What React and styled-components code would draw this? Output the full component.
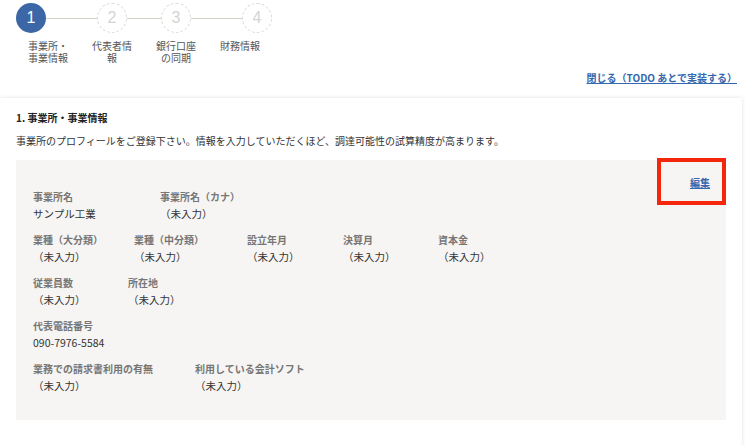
import React from 'react';
import styled, { createGlobalStyle } from 'styled-components';

const GlobalStyle = createGlobalStyle`
  body {
    margin: 0;
    background: #fff;
    font-family: "Noto Sans CJK JP", "Noto Sans", sans-serif;
    color: #333;
  }
`;

const Page = styled.div`
  width: 745px;
  height: 445px;
  overflow: hidden;
`;

const Stepper = styled.ol`
  display: flex;
  list-style: none;
  margin: 0;
  padding: 3px 0 0 16px;
`;

const Step = styled.li`
  width: 64px;
  display: flex;
  flex-direction: column;
  align-items: center;
`;

const StepHead = styled.div`
  width: 100%;
  display: flex;
  align-items: center;
`;

const Line = styled.span`
  flex: 1;
  height: 1px;
  background: ${(props) => (props.hidden ? 'transparent' : '#d6d1c6')};
`;

const Circle = styled.span`
  width: 30px;
  height: 30px;
  box-sizing: border-box;
  border-radius: 50%;
  display: flex;
  align-items: center;
  justify-content: center;
  font-family: "Liberation Sans", Arial, sans-serif;
  font-size: 16px;
  background: ${(props) => (props.active ? '#3c67a7' : '#fff')};
  color: ${(props) => (props.active ? '#fff' : '#d4d4d4')};
  border: ${(props) => (props.active ? 'none' : '1px dashed #d9d9d9')};
`;

const StepLabel = styled.span`
  margin-top: 7px;
  width: 44px;
  text-align: center;
  font-size: 10px;
  line-height: 12px;
  color: #555;
`;

const CloseRow = styled.div`
  display: flex;
  justify-content: flex-end;
  padding: 7px 8px 0 0;
`;

const TextLink = styled.a`
  font-size: 10px;
  line-height: 14px;
  font-weight: 600;
  color: #3467ad;
  text-decoration: underline;
  cursor: pointer;
`;

const Card = styled.section`
  margin: 13px 3px 0 0;
  background: #fff;
  box-shadow: 0 0 4px rgba(0, 0, 0, 0.12);
  padding: 13px 16px 40px;
`;

const Heading = styled.h2`
  margin: 0;
  font-size: 10px;
  line-height: 14px;
  font-weight: 700;
  color: #222;
`;

const Lead = styled.p`
  margin: 9px 0 0;
  font-size: 10px;
  line-height: 14px;
  color: #333;
`;

const InfoBox = styled.div`
  position: relative;
  margin-top: 12px;
  background: #f6f5f3;
  padding: 16px 16px 27px 17px;
`;

const EditBar = styled.div`
  display: flex;
  justify-content: flex-end;
`;

const Highlight = styled.span`
  position: absolute;
  top: -2px;
  right: 0;
  width: 69px;
  height: 47px;
  box-sizing: border-box;
  border: 4px solid #f4270c;
  pointer-events: none;
`;

const FieldRow = styled.div`
  display: flex;
  margin-top: ${(props) => props.gap}px;
`;

const Field = styled.div`
  width: ${(props) => (props.width ? `${props.width}px` : 'auto')};
  flex-shrink: 0;
`;

const FieldLabel = styled.div`
  font-size: 10px;
  line-height: 14px;
  font-weight: 600;
  color: #767676;
`;

const FieldValue = styled.div`
  margin-top: 3px;
  font-size: 10.5px;
  line-height: 14px;
  color: #333;
`;

const steps = [
  { no: 1, label: '事業所・事業情報', active: true },
  { no: 2, label: '代表者情報' },
  { no: 3, label: '銀行口座の同期' },
  { no: 4, label: '財務情報' },
];

const EMPTY = '（未入力）';

const rows = [
  [
    { label: '事業所名', value: 'サンプル工業', width: 127 },
    { label: '事業所名（カナ）', value: EMPTY },
  ],
  [
    { label: '業種（大分類）', value: EMPTY, width: 101 },
    { label: '業種（中分類）', value: EMPTY, width: 113 },
    { label: '設立年月', value: EMPTY, width: 96 },
    { label: '決算月', value: EMPTY, width: 95 },
    { label: '資本金', value: EMPTY },
  ],
  [
    { label: '従業員数', value: EMPTY, width: 95 },
    { label: '所在地', value: EMPTY },
  ],
  [{ label: '代表電話番号', value: '090-7976-5584' }],
  [
    { label: '業務での請求書利用の有無', value: EMPTY, width: 162 },
    { label: '利用している会計ソフト', value: EMPTY },
  ],
];

function App() {
  return (
    <Page>
      <GlobalStyle />
      <Stepper>
        {steps.map((step, index) => (
          <Step key={step.no}>
            <StepHead>
              <Line hidden={index === 0} />
              <Circle active={step.active}>{step.no}</Circle>
              <Line hidden={index === steps.length - 1} />
            </StepHead>
            <StepLabel>{step.label}</StepLabel>
          </Step>
        ))}
      </Stepper>

      <CloseRow>
        <TextLink>閉じる（TODO あとで実装する）</TextLink>
      </CloseRow>

      <Card>
        <Heading>1. 事業所・事業情報</Heading>
        <Lead>
          事業所のプロフィールをご登録下さい。情報を入力していただくほど、調達可能性の試算精度が高まります。
        </Lead>
        <InfoBox>
          <Highlight />
          <EditBar>
            <TextLink>編集</TextLink>
          </EditBar>
          {rows.map((row, index) => (
            <FieldRow key={index} gap={index === 0 ? 0 : 12}>
              {row.map((field) => (
                <Field key={field.label} width={field.width}>
                  <FieldLabel>{field.label}</FieldLabel>
                  <FieldValue>{field.value}</FieldValue>
                </Field>
              ))}
            </FieldRow>
          ))}
        </InfoBox>
      </Card>
    </Page>
  );
}

export default App;
